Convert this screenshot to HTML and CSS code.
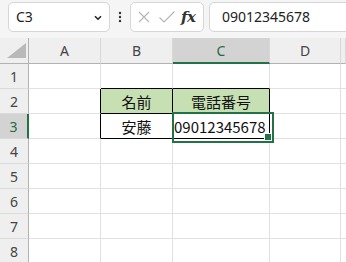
FILE: index.html
```html
<!DOCTYPE html>
<html lang="ja">
<head>
<meta charset="utf-8">
<link rel="stylesheet" href="styles.css">
</head>
<body>
<div class="bar">
  <div class="namebox">
    <span class="ref">C3</span>
    <svg class="chev" width="8" height="6" viewBox="0 0 8 6"><path d="M1 1.2 L4 4.2 L7 1.2" fill="none" stroke="#222" stroke-width="1.6"/></svg>
  </div>
  <div class="dots">
    <svg width="4" height="12" viewBox="0 0 4 12"><circle cx="2" cy="2" r="1.2" fill="#333"/><circle cx="2" cy="6" r="1.2" fill="#333"/><circle cx="2" cy="10" r="1.2" fill="#333"/></svg>
  </div>
  <div class="fbtns">
    <svg class="ico" width="14" height="14" viewBox="0 0 14 14"><path d="M2 2 L12 12 M12 2 L2 12" stroke="#b4b4b4" stroke-width="1.1" fill="none"/></svg>
    <svg class="ico chk" width="18" height="14" viewBox="0 0 18 14"><path d="M1.5 7.5 L6 12 L16.5 1.5" stroke="#b4b4b4" stroke-width="1.1" fill="none"/></svg>
    <span class="fx">fx</span>
  </div>
  <div class="finput">09012345678</div>
</div>
<div class="sheet">
  <div class="hd corner"><svg width="19" height="15" viewBox="0 0 19 15"><path d="M0 15 L19 0 L19 15 Z" fill="#b9b9b9"/></svg></div>
  <div class="hd col">A</div>
  <div class="hd col">B</div>
  <div class="hd col sel-col">C</div>
  <div class="hd col">D</div>
  <div class="hd col last"></div>

  <div class="hd row">1</div>
  <div class="c"></div><div class="c bb"></div><div class="c bb"></div><div class="c"></div><div class="c last"></div>

  <div class="hd row">2</div>
  <div class="c br"></div><div class="c tbl hdr-cell">名前</div><div class="c tbl hdr-cell">電話番号</div><div class="c"></div><div class="c last"></div>

  <div class="hd row sel-row">3</div>
  <div class="c br"></div><div class="c tbl">安藤</div><div class="c tbl active"><span class="num">09012345678</span></div><div class="c"></div><div class="c last"></div>

  <div class="hd row">4</div>
  <div class="c"></div><div class="c"></div><div class="c"></div><div class="c"></div><div class="c last"></div>

  <div class="hd row">5</div>
  <div class="c"></div><div class="c"></div><div class="c"></div><div class="c"></div><div class="c last"></div>

  <div class="hd row">6</div>
  <div class="c"></div><div class="c"></div><div class="c"></div><div class="c"></div><div class="c last"></div>

  <div class="hd row">7</div>
  <div class="c"></div><div class="c"></div><div class="c"></div><div class="c"></div><div class="c last"></div>

  <div class="hd row">8</div>
  <div class="c"></div><div class="c"></div><div class="c"></div><div class="c"></div><div class="c last"></div>
</div>
</body>
</html>
```

FILE: styles.css
```css
* { box-sizing: border-box; }
html, body { margin: 0; padding: 0; }
body {
  width: 346px;
  height: 262px;
  overflow: hidden;
  background: #ffffff;
  font-family: "Noto Sans", "Noto Sans CJK JP", sans-serif;
}
.bar {
  height: 38px;
  background: #f5f5f5;
  display: flex;
  align-items: flex-start;
  padding: 2px 0 0 8px;
  overflow: hidden;
}
.namebox {
  width: 102px;
  height: 30px;
  background: #fff;
  border: 1px solid #d6d6d6;
  border-radius: 5px;
  display: flex;
  align-items: center;
  justify-content: space-between;
  padding: 0 7px 0 7px;
  flex: none;
}
.ref {
  font-size: 14px;
  color: #222;
  line-height: 1;
}
.chev { margin-top: 1px; }
.dots {
  width: 20px;
  height: 30px;
  display: flex;
  align-items: center;
  justify-content: center;
  flex: none;
}
.fbtns {
  width: 74px;
  height: 30px;
  background: #fff;
  border: 1px solid #d6d6d6;
  border-radius: 5px;
  display: flex;
  align-items: center;
  padding-left: 6px;
  flex: none;
}
.chk { margin-left: 7px; }
.fx {
  font-family: "DejaVu Serif", "Liberation Serif", serif;
  font-style: italic;
  font-weight: bold;
  font-size: 15px;
  color: #333;
  margin-left: 5px;
  line-height: 1;
  letter-spacing: -0.5px;
}
.finput {
  width: 170px;
  height: 30px;
  margin-left: 5px;
  background: #fff;
  border: 1px solid #d6d6d6;
  border-radius: 5px;
  flex: none;
  font-size: 14px;
  color: #222;
  padding-left: 12px;
  line-height: 28px;
}
.sheet {
  display: grid;
  grid-template-columns: 29px 72px 72px 97px 71px 1fr;
  grid-template-rows: 26px repeat(8, 25px);
}
.hd {
  background: #efefef;
  color: #444;
  font-size: 14px;
  display: flex;
  align-items: center;
  justify-content: center;
}
.hd.col {
  border-right: 1px solid #d8d8d8;
  border-bottom: 1px solid #b2b2b2;
}
.hd.row {
  border-right: 1px solid #b2b2b2;
  border-bottom: 1px solid #dadada;
}
.hd.corner {
  border-right: 1px solid #b2b2b2;
  border-bottom: 1px solid #b2b2b2;
  align-items: flex-end;
  justify-content: flex-end;
  padding: 0 2px 5px 0;
}
.hd.sel-col {
  background: #d3d3d3;
  color: #1f6b44;
  border-bottom: 2px solid #217346;
}
.hd.sel-row {
  background: #d3d3d3;
  color: #1f6b44;
  border-right: 2px solid #217346;
}
.c {
  border-right: 1px solid #e1e1e1;
  border-bottom: 1px solid #e1e1e1;
  font-family: "Noto Sans CJK JP", sans-serif;
  font-size: 15px;
  color: #111;
  display: flex;
  align-items: center;
  justify-content: center;
}
.c.last { border-right: none; }
.c.bb { border-bottom-color: #000; }
.c.br { border-right-color: #000; }
.c.tbl {
  border-right-color: #000;
  border-bottom-color: #000;
  padding-top: 1px;
}
.c.hdr-cell { background: #c6e0b4; }
.c.active {
  position: relative;
  justify-content: flex-start;
  padding-left: 1px;
}
.num { letter-spacing: 0; }
.c.active::after {
  content: "";
  position: absolute;
  left: -1px;
  top: -2px;
  width: 98px;
  height: 27px;
  border: 2px solid #217346;
}
.c.active::before {
  content: "";
  position: absolute;
  right: -3px;
  bottom: -3px;
  width: 6px;
  height: 6px;
  background: #217346;
  border: 1px solid #fff;
  z-index: 2;
}
```
